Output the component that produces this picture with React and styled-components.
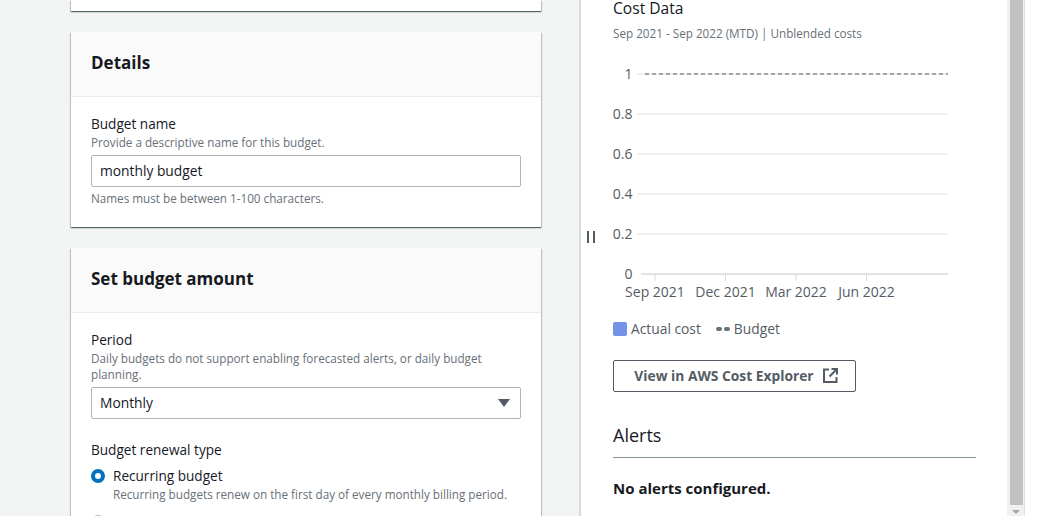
import React from "react";
import styled, { createGlobalStyle } from "styled-components";

const GlobalStyle = createGlobalStyle`
  html, body {
    margin: 0;
    height: 100%;
    overflow: hidden;
    background: #fff;
  }
  * { box-sizing: border-box; }
`;

const Page = styled.div`
  width: 1041px;
  height: 516px;
  display: flex;
  overflow: hidden;
  font-family: "Open Sans", "Noto Sans", sans-serif;
  color: #16191f;
`;

const Main = styled.div`
  width: 1008px;
  height: 516px;
  flex: none;
  display: flex;
  background: #f2f3f3;
  padding-left: 71px;
`;

const FormColumn = styled.div`
  width: 470px;
  flex: none;
  display: flex;
  flex-direction: column;
  gap: 21px;
`;

const Card = styled.section`
  background: #fff;
  box-shadow: 0 1px 1px 0 rgba(0, 28, 36, 0.5), 1px 1px 1px 0 rgba(0, 28, 36, 0.15),
    -1px 1px 1px 0 rgba(0, 28, 36, 0.15);
  flex: none;
`;

const StubCard = styled(Card)`
  height: 11px;
`;

const CardHeader = styled.header`
  height: 65px;
  padding: 0 20px 3px;
  display: flex;
  align-items: center;
  background: #fafafa;
  border-bottom: 1px solid #eaeded;
  font-size: 17px;
  font-weight: 700;
  margin: 0;
`;

const CardBody = styled.div`
  padding: 17px 20px 21px;
`;

const Label = styled.div`
  font-size: 13.6px;
  line-height: 19px;
  color: #16191f;
`;

const Hint = styled.div`
  font-size: 11.7px;
  line-height: 16px;
  color: #687078;
`;

const LabelHint = styled(Hint)`
  margin-top: 1px;
`;

const Control = styled.div`
  height: 32px;
  margin-top: 5px;
  padding: 0 8px 1px;
  display: flex;
  align-items: center;
  justify-content: space-between;
  border: 1px solid #aab7b8;
  border-radius: 2px;
  font-size: 13.8px;
  color: #16191f;
`;

const HintBelow = styled(Hint)`
  margin-top: 3px;
`;

const Caret = styled.span`
  width: 0;
  height: 0;
  margin-right: 2px;
  border-left: 6px solid transparent;
  border-right: 6px solid transparent;
  border-top: 8px solid #545b64;
`;

const RenewalLabel = styled(Label)`
  margin-top: 21px;
`;

const RadioRow = styled.div`
  display: flex;
  gap: 8px;
  margin-top: 7px;

  & + & {
    margin-top: 10px;
  }
`;

const Radio = styled.span`
  width: 14px;
  height: 14px;
  margin-top: 3px;
  flex: none;
  border-radius: 50%;
  background: #fff;
  border: ${(props) => (props.$checked ? "4px solid #0073bb" : "1px solid #aab7b8")};
`;

const RadioText = styled.div`
  display: flex;
  flex-direction: column;
`;

const RadioTitle = styled(Label)`
  line-height: 20px;
`;

const SidePanel = styled.aside`
  width: 428px;
  height: 516px;
  flex: none;
  margin-left: 38px;
  padding: 0 32px;
  background: #fff;
  border-left: 2px solid #d5dbdb;
  position: relative;
`;

const PanelTitle = styled.h3`
  margin: 0;
  font-size: 15.6px;
  font-weight: 400;
  line-height: 16px;
`;

const PanelSub = styled(Hint)`
  margin-top: 10px;
  line-height: 15px;
`;

const Handle = styled.span`
  position: absolute;
  left: 6px;
  top: 231px;
  width: 8px;
  height: 12px;
  border-left: 2px solid #545b64;
  border-right: 2px solid #545b64;
`;

const Chart = styled.svg`
  display: block;
  margin: 7px 0 0 -32px;
  overflow: visible;
`;

const AxisText = styled.text`
  font-family: "Open Sans", "Noto Sans", sans-serif;
  font-size: 14px;
  fill: #545b64;
`;

const Legend = styled.div`
  display: flex;
  align-items: center;
  margin-top: 22px;
  font-size: 13.8px;
  line-height: 18px;
  color: #545b64;
`;

const Swatch = styled.span`
  width: 14px;
  height: 14px;
  border-radius: 2px;
  background: #7492e7;
  margin-right: 4px;
`;

const LegendDash = styled.span`
  display: inline-flex;
  gap: 2px;
  margin: 0 4px 0 15px;

  i {
    width: 6px;
    height: 4px;
    border-radius: 2px;
    background: #687078;
  }
`;

const Button = styled.div`
  width: 243px;
  height: 32px;
  margin-top: 22px;
  padding: 0 0 1px 3px;
  display: flex;
  align-items: center;
  justify-content: center;
  gap: 9px;
  border: 1px solid #545b64;
  border-radius: 2px;
  font-size: 13.8px;
  font-weight: 700;
  color: #545b64;
`;

const SectionTitle = styled.h3`
  margin: 31px 0 0;
  width: 363px;
  height: 35px;
  border-bottom: 1px solid #879596;
  font-size: 18px;
  font-weight: 400;
  line-height: 24px;
  color: #16191f;
`;

const EmptyNote = styled.p`
  margin: 20px 0 0;
  font-size: 15px;
  font-weight: 700;
  line-height: 20px;
`;

const Scrollbar = styled.div`
  width: 17px;
  height: 516px;
  flex: none;
  background: #f1f1f1;
  padding: 0 2px;
  border-right: 1px solid #e0e0e0;
  position: relative;
`;

const Thumb = styled.div`
  width: 13px;
  height: 505px;
  background: #c1c1c1;
`;

const ScrollArrow = styled.span`
  position: absolute;
  left: 4px;
  bottom: 2px;
  width: 0;
  height: 0;
  border-left: 4px solid transparent;
  border-right: 4px solid transparent;
  border-top: 4px solid #a3a3a3;
`;

const yTicks = ["1", "0.8", "0.6", "0.4", "0.2", "0"];
const xTicks = [
  { x: 74, label: "Sep 2021" },
  { x: 144.5, label: "Dec 2021" },
  { x: 215, label: "Mar 2022" },
  { x: 285.5, label: "Jun 2022" },
];

const CostChart = () => (
  <Chart width="380" height="250" viewBox="0 0 380 250">
    {yTicks.map((t, i) => {
      const y = 26 + i * 40;
      if (t === "1" || t === "0") return null;
      return <line key={t} x1="56" x2="367" y1={y} y2={y} stroke="#eaeded" strokeWidth="1.5" />;
    })}
    <line x1="56" x2="367" y1="26" y2="26" stroke="#eaeded" strokeWidth="1.5" />
    <line x1="64" x2="367" y1="26" y2="26" stroke="#545b64" strokeWidth="1" strokeDasharray="4 3" />
    <line x1="60" x2="367" y1="226" y2="226" stroke="#d5dbdb" strokeWidth="1.5" />
    {yTicks.map((t, i) => (
      <AxisText key={t} x="51.5" y={31 + i * 40} textAnchor="end">
        {t}
      </AxisText>
    ))}
    {xTicks.map((t) => (
      <g key={t.label}>
        <line x1={t.x} x2={t.x} y1="226" y2="233" stroke="#d5dbdb" />
        <AxisText x={t.x} y="249" textAnchor="middle">
          {t.label}
        </AxisText>
      </g>
    ))}
  </Chart>
);

const ExternalIcon = () => (
  <svg width="15" height="15" viewBox="0 0 15 15" fill="none" stroke="#545b64" strokeWidth="2">
    <path d="M6 1.5H1v12.5h12.5V9" />
    <path d="M8.5 1h5.5v5.5" />
    <path d="M14 1L6.5 8.5" />
  </svg>
);

export default function App() {
  return (
    <Page>
      <GlobalStyle />
      <Main>
        <FormColumn>
          <StubCard />
          <Card>
            <CardHeader>Details</CardHeader>
            <CardBody>
              <Label>Budget name</Label>
              <LabelHint>Provide a descriptive name for this budget.</LabelHint>
              <Control>monthly budget</Control>
              <HintBelow>Names must be between 1-100 characters.</HintBelow>
            </CardBody>
          </Card>
          <Card>
            <CardHeader>Set budget amount</CardHeader>
            <CardBody>
              <Label>Period</Label>
              <LabelHint>Daily budgets do not support enabling forecasted alerts, or daily budget planning.</LabelHint>
              <Control>
                Monthly
                <Caret />
              </Control>
              <RenewalLabel>Budget renewal type</RenewalLabel>
              <RadioRow>
                <Radio $checked />
                <RadioText>
                  <RadioTitle>Recurring budget</RadioTitle>
                  <Hint>Recurring budgets renew on the first day of every monthly billing period.</Hint>
                </RadioText>
              </RadioRow>
              <RadioRow>
                <Radio />
              </RadioRow>
            </CardBody>
          </Card>
        </FormColumn>
        <SidePanel>
          <Handle />
          <PanelTitle>Cost Data</PanelTitle>
          <PanelSub>Sep 2021 - Sep 2022 (MTD) | Unblended costs</PanelSub>
          <CostChart />
          <Legend>
            <Swatch />
            Actual cost
            <LegendDash>
              <i />
              <i />
            </LegendDash>
            Budget
          </Legend>
          <Button>
            View in AWS Cost Explorer
            <ExternalIcon />
          </Button>
          <SectionTitle>Alerts</SectionTitle>
          <EmptyNote>No alerts configured.</EmptyNote>
        </SidePanel>
      </Main>
      <Scrollbar>
        <Thumb />
        <ScrollArrow />
      </Scrollbar>
    </Page>
  );
}
